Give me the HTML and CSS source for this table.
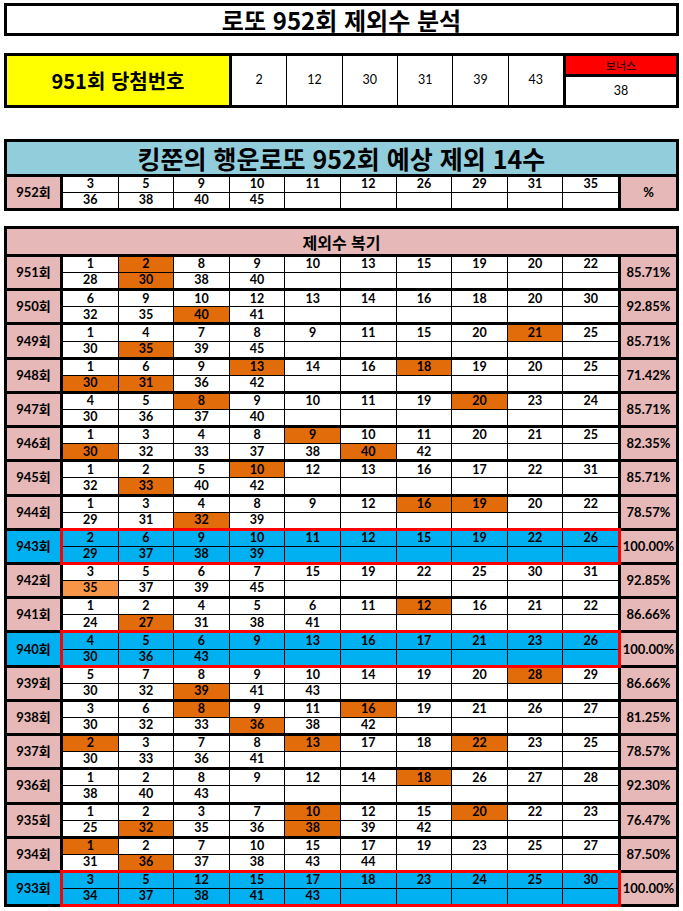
FILE: index.html
```html
<!DOCTYPE html>
<html lang="ko">
<head>
<meta charset="utf-8">
<title>로또 952회 제외수 분석</title>
<link rel="stylesheet" href="styles.css">
</head>
<body>
<div class="page">
  <div class="title">로또 952회 제외수 분석</div>

  <div class="win">
    <div class="win-label">951회 당첨번호</div>
    <div class="win-nums">
      <span>2</span><span>12</span><span>30</span><span>31</span><span>39</span><span>43</span>
    </div>
    <div class="bonus">
      <div class="bonus-head">보너스</div>
      <div class="bonus-num">38</div>
    </div>
  </div>

  <div class="pred">
    <div class="pred-head">킹쭌의 행운로또 952회 예상 제외 14수</div>
    <div class="row pred-row">
      <div class="lbl">952회</div>
      <div class="nums">
        <span>3</span><span>5</span><span>9</span><span>10</span><span>11</span><span>12</span><span>26</span><span>29</span><span>31</span><span>35</span>
        <span>36</span><span>38</span><span>40</span><span>45</span><span></span><span></span><span></span><span></span><span></span><span></span>
      </div>
      <div class="pct">%</div>
    </div>
  </div>

  <div class="board">
    <div class="board-head">제외수 복기</div>

    <div class="row">
      <div class="lbl">951회</div>
      <div class="nums">
        <span>1</span><span class="o">2</span><span>8</span><span>9</span><span>10</span><span>13</span><span>15</span><span>19</span><span>20</span><span>22</span>
        <span>28</span><span class="o">30</span><span>38</span><span>40</span><span></span><span></span><span></span><span></span><span></span><span></span>
      </div>
      <div class="pct">85.71%</div>
    </div>

    <div class="row">
      <div class="lbl">950회</div>
      <div class="nums">
        <span>6</span><span>9</span><span>10</span><span>12</span><span>13</span><span>14</span><span>16</span><span>18</span><span>20</span><span>30</span>
        <span>32</span><span>35</span><span class="o">40</span><span>41</span><span></span><span></span><span></span><span></span><span></span><span></span>
      </div>
      <div class="pct">92.85%</div>
    </div>

    <div class="row">
      <div class="lbl">949회</div>
      <div class="nums">
        <span>1</span><span>4</span><span>7</span><span>8</span><span>9</span><span>11</span><span>15</span><span>20</span><span class="o">21</span><span>25</span>
        <span>30</span><span class="o">35</span><span>39</span><span>45</span><span></span><span></span><span></span><span></span><span></span><span></span>
      </div>
      <div class="pct">85.71%</div>
    </div>

    <div class="row">
      <div class="lbl">948회</div>
      <div class="nums">
        <span>1</span><span>6</span><span>9</span><span class="o">13</span><span>14</span><span>16</span><span class="o">18</span><span>19</span><span>20</span><span>25</span>
        <span class="o">30</span><span class="o">31</span><span>36</span><span>42</span><span></span><span></span><span></span><span></span><span></span><span></span>
      </div>
      <div class="pct">71.42%</div>
    </div>

    <div class="row">
      <div class="lbl">947회</div>
      <div class="nums">
        <span>4</span><span>5</span><span class="o">8</span><span>9</span><span>10</span><span>11</span><span>19</span><span class="o">20</span><span>23</span><span>24</span>
        <span>30</span><span>36</span><span>37</span><span>40</span><span></span><span></span><span></span><span></span><span></span><span></span>
      </div>
      <div class="pct">85.71%</div>
    </div>

    <div class="row">
      <div class="lbl">946회</div>
      <div class="nums">
        <span>1</span><span>3</span><span>4</span><span>8</span><span class="o">9</span><span>10</span><span>11</span><span>20</span><span>21</span><span>25</span>
        <span class="o">30</span><span>32</span><span>33</span><span>37</span><span>38</span><span class="o">40</span><span>42</span><span></span><span></span><span></span>
      </div>
      <div class="pct">82.35%</div>
    </div>

    <div class="row">
      <div class="lbl">945회</div>
      <div class="nums">
        <span>1</span><span>2</span><span>5</span><span class="o">10</span><span>12</span><span>13</span><span>16</span><span>17</span><span>22</span><span>31</span>
        <span>32</span><span class="o">33</span><span>40</span><span>42</span><span></span><span></span><span></span><span></span><span></span><span></span>
      </div>
      <div class="pct">85.71%</div>
    </div>

    <div class="row">
      <div class="lbl">944회</div>
      <div class="nums">
        <span>1</span><span>3</span><span>4</span><span>8</span><span>9</span><span>12</span><span class="o">16</span><span class="o">19</span><span>20</span><span>22</span>
        <span>29</span><span>31</span><span class="o">32</span><span>39</span><span></span><span></span><span></span><span></span><span></span><span></span>
      </div>
      <div class="pct">78.57%</div>
    </div>

    <div class="row hit">
      <div class="lbl">943회</div>
      <div class="nums">
        <span>2</span><span>6</span><span>9</span><span>10</span><span>11</span><span>12</span><span>15</span><span>19</span><span>22</span><span>26</span>
        <span>29</span><span>37</span><span>38</span><span>39</span><span></span><span></span><span></span><span></span><span></span><span></span>
      </div>
      <div class="pct">100.00%</div>
    </div>

    <div class="row">
      <div class="lbl">942회</div>
      <div class="nums">
        <span>3</span><span>5</span><span>6</span><span>7</span><span>15</span><span>19</span><span>22</span><span>25</span><span>30</span><span>31</span>
        <span class="lo">35</span><span>37</span><span>39</span><span>45</span><span></span><span></span><span></span><span></span><span></span><span></span>
      </div>
      <div class="pct">92.85%</div>
    </div>

    <div class="row">
      <div class="lbl">941회</div>
      <div class="nums">
        <span>1</span><span>2</span><span>4</span><span>5</span><span>6</span><span>11</span><span class="o">12</span><span>16</span><span>21</span><span>22</span>
        <span>24</span><span class="o">27</span><span>31</span><span>38</span><span>41</span><span></span><span></span><span></span><span></span><span></span>
      </div>
      <div class="pct">86.66%</div>
    </div>

    <div class="row hit">
      <div class="lbl">940회</div>
      <div class="nums">
        <span>4</span><span>5</span><span>6</span><span>9</span><span>13</span><span>16</span><span>17</span><span>21</span><span>23</span><span>26</span>
        <span>30</span><span>36</span><span>43</span><span></span><span></span><span></span><span></span><span></span><span></span><span></span>
      </div>
      <div class="pct">100.00%</div>
    </div>

    <div class="row">
      <div class="lbl">939회</div>
      <div class="nums">
        <span>5</span><span>7</span><span>8</span><span>9</span><span>10</span><span>14</span><span>19</span><span>20</span><span class="o">28</span><span>29</span>
        <span>30</span><span>32</span><span class="o">39</span><span>41</span><span>43</span><span></span><span></span><span></span><span></span><span></span>
      </div>
      <div class="pct">86.66%</div>
    </div>

    <div class="row">
      <div class="lbl">938회</div>
      <div class="nums">
        <span>3</span><span>6</span><span class="o">8</span><span>9</span><span>11</span><span class="o">16</span><span>19</span><span>21</span><span>26</span><span>27</span>
        <span>30</span><span>32</span><span>33</span><span class="o">36</span><span>38</span><span>42</span><span></span><span></span><span></span><span></span>
      </div>
      <div class="pct">81.25%</div>
    </div>

    <div class="row">
      <div class="lbl">937회</div>
      <div class="nums">
        <span class="o">2</span><span>3</span><span>7</span><span>8</span><span class="o">13</span><span>17</span><span>18</span><span class="o">22</span><span>23</span><span>25</span>
        <span>30</span><span>33</span><span>36</span><span>41</span><span></span><span></span><span></span><span></span><span></span><span></span>
      </div>
      <div class="pct">78.57%</div>
    </div>

    <div class="row">
      <div class="lbl">936회</div>
      <div class="nums">
        <span>1</span><span>2</span><span>8</span><span>9</span><span>12</span><span>14</span><span class="o">18</span><span>26</span><span>27</span><span>28</span>
        <span>38</span><span>40</span><span>43</span><span></span><span></span><span></span><span></span><span></span><span></span><span></span>
      </div>
      <div class="pct">92.30%</div>
    </div>

    <div class="row">
      <div class="lbl">935회</div>
      <div class="nums">
        <span>1</span><span>2</span><span>3</span><span>7</span><span class="o">10</span><span>12</span><span>15</span><span class="o">20</span><span>22</span><span>23</span>
        <span>25</span><span class="o">32</span><span>35</span><span>36</span><span class="o">38</span><span>39</span><span>42</span><span></span><span></span><span></span>
      </div>
      <div class="pct">76.47%</div>
    </div>

    <div class="row">
      <div class="lbl">934회</div>
      <div class="nums">
        <span class="o">1</span><span>2</span><span>7</span><span>10</span><span>15</span><span>17</span><span>19</span><span>23</span><span>25</span><span>27</span>
        <span>31</span><span class="o">36</span><span>37</span><span>38</span><span>43</span><span>44</span><span></span><span></span><span></span><span></span>
      </div>
      <div class="pct">87.50%</div>
    </div>

    <div class="row hit">
      <div class="lbl">933회</div>
      <div class="nums">
        <span>3</span><span>5</span><span>12</span><span>15</span><span>17</span><span>18</span><span>23</span><span>24</span><span>25</span><span>30</span>
        <span>34</span><span>37</span><span>38</span><span>41</span><span>43</span><span></span><span></span><span></span><span></span><span></span>
      </div>
      <div class="pct">100.00%</div>
    </div>
  </div>
</div>
</body>
</html>
```

FILE: styles.css
```css
* {
  box-sizing: border-box;
}

html, body {
  margin: 0;
  padding: 0;
  background: #fff;
}

body {
  font-family: "Noto Sans CJK KR", "Noto Sans", sans-serif;
  color: #000;
}

.page {
  width: 675px;
  margin-left: 4px;
  padding-top: 3px;
}

/* title */
.title {
  height: 33px;
  border: 3px solid #000;
  display: flex;
  align-items: center;
  justify-content: center;
  font-size: 24px;
  font-weight: 700;
  line-height: 1;
}

/* winning numbers */
.win {
  margin-top: 17px;
  height: 55px;
  border: 3px solid #000;
  background: #000;
  display: grid;
  grid-template-columns: 222px 331px 110px;
  column-gap: 3px;
}

.win-label {
  background: #ffff00;
  display: flex;
  align-items: center;
  justify-content: center;
  font-size: 20px;
  font-weight: 700;
  line-height: 1;
}

.win-nums {
  display: grid;
  grid-template-columns: repeat(6, 1fr);
  column-gap: 1px;
}

.win-nums span {
  background: #fff;
  display: flex;
  align-items: center;
  justify-content: center;
  font-family: Lato, "Noto Sans CJK KR", sans-serif;
  font-size: 12.5px;
  line-height: 1;
}

.bonus {
  display: grid;
  grid-template-rows: 18px 1fr;
  row-gap: 3px;
}

.bonus-head {
  background: #ff0000;
  display: flex;
  align-items: center;
  justify-content: center;
  font-size: 11px;
  line-height: 1;
  overflow: hidden;
}

.bonus-num {
  background: #fff;
  display: flex;
  align-items: center;
  justify-content: center;
  font-family: Lato, "Noto Sans CJK KR", sans-serif;
  font-size: 12.5px;
  line-height: 1;
}

/* prediction box */
.pred {
  margin-top: 31px;
  border: 3px solid #000;
  background: #000;
  display: flex;
  flex-direction: column;
  row-gap: 3px;
}

.pred-head {
  height: 32px;
  background: #92cddc;
  display: flex;
  align-items: center;
  justify-content: center;
  font-size: 25px;
  font-weight: 700;
  line-height: 1;
}

/* shared rows */
.row {
  display: grid;
  grid-template-columns: 53px 1fr 55px;
  column-gap: 3px;
  height: 31.22px;
}

.pred-row {
  height: 31px;
}

.lbl,
.pct {
  background: #e6b8b7;
  display: flex;
  align-items: center;
  justify-content: center;
  font-family: Lato, "Noto Sans CJK KR", sans-serif;
  font-size: 13px;
  font-weight: 700;
  line-height: 1;
}

.nums {
  display: grid;
  grid-template-columns: repeat(10, 1fr);
  grid-template-rows: 1fr 1fr;
  gap: 1px;
  background: #000;
}

.nums span {
  background: #fff;
  display: flex;
  align-items: center;
  justify-content: center;
  font-family: Lato, "Noto Sans CJK KR", sans-serif;
  font-size: 12.5px;
  font-weight: 700;
  line-height: 1;
  overflow: hidden;
}

.nums span.o {
  background: #e26b0a;
}

.nums span.lo {
  background: #f79646;
}

.row.hit .lbl,
.row.hit .nums span {
  background: #00b0f0;
}

.row.hit .nums {
  outline: 3px solid #ff0000;
}

/* board */
.board {
  margin-top: 15px;
  border: 3px solid #000;
  background: #000;
  display: flex;
  flex-direction: column;
  row-gap: 3px;
}

.board-head {
  height: 25px;
  background: #e6b8b7;
  display: flex;
  align-items: center;
  justify-content: center;
  font-size: 16px;
  font-weight: 700;
  line-height: 1;
}
```
